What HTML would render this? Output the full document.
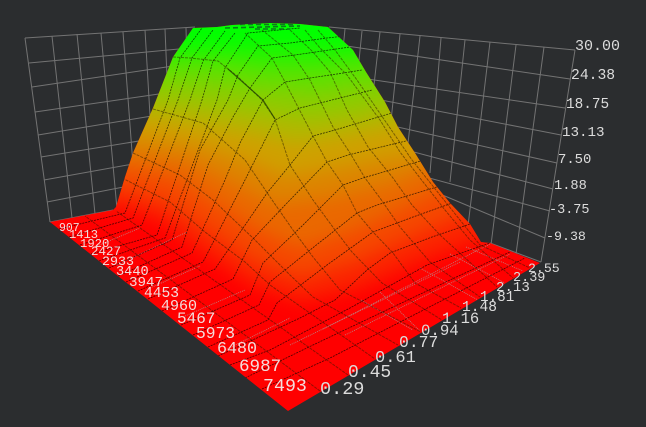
<!DOCTYPE html>
<html>
<head>
<meta charset="utf-8">
<style>
html,body{margin:0;padding:0;background:#2b2d2f;width:646px;height:427px;overflow:hidden}
svg{display:block}
text{font-family:"Liberation Mono","DejaVu Sans Mono",monospace;fill:#dcdcdc}
.w{fill:none;stroke:#737373;stroke-width:1}
.r{fill:none;stroke:#000;stroke-width:.8;stroke-opacity:.7;stroke-dasharray:2 1}
.c{fill:none;stroke:#2a1a00;stroke-width:1;stroke-opacity:.5;stroke-dasharray:3 1}
.g{fill:none;stroke:#a8a8a8;stroke-width:.8;stroke-dasharray:1 1;stroke-opacity:.8}
.t{fill:none;stroke:#0b7d1c;stroke-width:1.6;stroke-dasharray:5 3}
</style>
</head>
<body>
<svg width="646" height="427" viewBox="0 0 646 427" xmlns="http://www.w3.org/2000/svg">
<defs>
<clipPath id="s"><polygon points="50,222 113,210 116,207 125,177 133,153 153,108 173,57 193,28 217,27 232,25 270,23 300,24 328,27 353,50 366,72 385,102 398,127 415,153 433,182 450,203 470,224 481,242 490,243 540,263 288,411"/></clipPath>
<filter id="b" filterUnits="userSpaceOnUse" x="-100" y="-100" width="850" height="650" color-interpolation-filters="sRGB"><feGaussianBlur stdDeviation="9"/></filter>
</defs>
<rect width="646" height="427" fill="#2b2d2f"/>

<!-- left wall -->
<g class="w">
<path d="M25,38L195,27M29,63L200,47M32,87L200,62M35,112L200,88M38,135L200,108M41,157L200,131M44,180L200,152M47,202L200,172M50,222L113,210"/>
<path d="M25,38L50,222M52,36L72,218M77,34L95,214M101,33L117,209M123,32L136,205M145,30L155,201M165,29L172,198M186,28L190,195"/>
</g>
<!-- right wall -->
<g class="w">
<path d="M329,27L575,50M340,45L570,79M340,75L565,108M340,92L561,135M340,114L557,163M380,143L553,189M400,170L550,211M440,194L545,238M490,243L541,262"/>
<path d="M575,50L541,262M544,47L516,254M516,45L491,245M490,42L468,226M465,40L450,182M441,38L430,173M420,36L405,170M400,34L388,150M380,32L370,120M362,31L355,100M345,29L340,80"/>
</g>

<g clip-path="url(#s)">
<rect x="0" y="0" width="646" height="427" fill="#ff0000"/>
<g filter="url(#b)">
<polygon fill="#fb2400" points="-60,202 116,206 160,220 200,250 250,284 300,302 360,288 420,262 480,240 720,200 720,-60 -60,-60"/>
<polygon fill="#f54800" points="-60,184 122,190 165,202 208,230 255,262 300,278 355,262 410,238 460,216 720,180 720,-60 -60,-60"/>
<polygon fill="#ea6800" points="-60,166 128,170 175,178 220,206 262,232 300,248 350,232 400,210 445,188 720,165 720,-60 -60,-60"/>
<polygon fill="#dd8400" points="-60,150 133,154 185,160 235,184 275,204 330,198 390,184 430,168 720,145 720,-60 -60,-60"/>
<polygon fill="#cfa000" points="-60,134 140,136 195,144 245,160 285,176 335,168 395,157 720,125 720,-60 -60,-60"/>
<polygon fill="#b0b800" points="-60,116 148,116 200,124 250,132 295,142 345,135 400,125 720,105 720,-60 -60,-60"/>
<polygon fill="#8ccc00" points="-60,98 155,98 210,105 265,112 310,118 360,112 385,105 720,90 720,-60 -60,-60"/>
<polygon fill="#60e000" points="-60,80 163,78 215,82 270,88 315,92 365,85 720,75 720,-60 -60,-60"/>
<polygon fill="#28f200" points="-60,62 175,60 220,60 270,66 320,66 352,62 720,55 720,-60 -60,-60"/>
<polygon fill="#00ff00" points="-60,46 720,46 720,-60 -60,-60"/>
</g>

<!-- floor grid showing through -->
<g class="g">
<path d="M323,329L490,244M290,345L460,262M345,335L510,254M380,292L420,331M466,247L523,271M361,300L413,330M450,254L505,283M420,268L478,300M97,246L140,228M117,265L187,232M150,288L200,266M185,316L245,290M225,350L290,318"/>
</g>

<!-- rows -->
<g class="r">
<path d="M59,229L125,213L168,100L180,58L202,28"/>
<path d="M69,237L133,218L178,100L192,58L213,30"/>
<path d="M80,245L142,225L190,100L203,61L225,31"/>
<path d="M91,254L157,235L202,100L213,61L235,33"/>
<path d="M99,261L165,238L217,100L225,68L248,33L300,28"/>
<path d="M109,268L172,240L200,150L228,100L238,75L258,46L290,43L327,38L345,36"/>
<path d="M118,276L182,247L208,165L233,117L250,88L272,58L295,55L350,47L358,45"/>
<path d="M126,282L192,253L225,180L240,143L263,100L285,82L310,78L337,74L362,70"/>
<path d="M138,291L203,262L245,180L275,120L300,108L320,103L372,90"/>
<path d="M148,299L215,269L267,193L290,165L313,136L335,130L392,113"/>
<path d="M162,311L233,279L252,240L287,203L327,162L348,155L410,140"/>
<path d="M181,325L250,295L263,263L303,225L343,185L363,178L424,160"/>
<path d="M193,335L259,305L270,282L310,250L357,213L377,205L440,186"/>
<path d="M208,347L268,320L277,303L327,265L373,232L413,217L455,202"/>
<path d="M218,356L300,318L335,300L367,270L390,253L432,237L470,224"/>
<path d="M230,365L270,350L350,308L427,265L490,243"/>
<path d="M245,378L313,345L450,280L510,252"/>
<path d="M262,389L330,358L443,300L525,258"/>
</g>
<!-- columns -->
<g class="c">
<path d="M320,391L85,216M348,375L116,211"/>
<path d="M122,178L170,202L205,232L245,262L270,285L375,359"/>
<path d="M133,153L180,175L213,200L255,240L290,275L313,297L398,345"/>
<path d="M153,109L203,123L245,160L270,197L293,230L313,257L340,290L421,332"/>
<path d="M173,57L190,58L218,61L237,76L262,100L275,119L290,165L313,200L335,230L352,252L382,283L442,320"/>
<path d="M245,33L272,58L285,82L313,136L327,162L343,185L357,213L373,232L393,253L415,283L461,308"/>
<path d="M262,30L293,55L310,80L333,127L350,153L365,178L380,198L400,227L430,262L480,297"/>
<path d="M290,30L313,52L330,72L347,110L368,147L393,178L412,205L440,235L497,287"/>
<path d="M305,30L320,48L347,75L380,120L400,152L420,178L445,210L470,240L513,278"/>
<path d="M318,30L335,50L357,80L390,128L412,160L432,185L452,210L480,245L530,268"/>
</g>
<path fill="none" stroke="#1a3a00" stroke-width="1.2" stroke-opacity=".7" d="M228,69L263,100L275,119"/>
<!-- crown -->
<path class="t" d="M225,28L300,26M240,24.5L295,24.5M255,29L290,29"/>
</g>

<!-- z labels -->
<text x="575" y="50" font-size="15">30.00</text>
<text x="571" y="79" font-size="14.7">24.38</text>
<text x="566" y="108" font-size="14.4">18.75</text>
<text x="562" y="136" font-size="14.2">13.13</text>
<text x="558" y="163" font-size="13.9">7.50</text>
<text x="554" y="189" font-size="13.7">1.88</text>
<text x="549" y="213" font-size="13.5">-3.75</text>
<text x="546" y="240" font-size="13.3">-9.38</text>

<!-- rpm labels -->
<g>
<text x="59" y="231" font-size="11.5" style="fill:#f4dcdc">907</text>
<text x="69" y="238" font-size="12.1" style="fill:#f4dcdc">1413</text>
<text x="80" y="247" font-size="12.2" style="fill:#f4dcdc">1920</text>
<text x="91" y="255" font-size="12.5" style="fill:#f4dcdc">2427</text>
<text x="102" y="265" font-size="13.3" style="fill:#f4dcdc">2933</text>
<text x="116" y="275" font-size="13.6" style="fill:#f4dcdc">3440</text>
<text x="129" y="286" font-size="14.2" style="fill:#f4dcdc">3947</text>
<text x="144" y="297" font-size="14.6" style="fill:#f4dcdc">4453</text>
<text x="161" y="310" font-size="15" style="fill:#f4dcdc">4960</text>
<text x="177" y="323" font-size="16" style="fill:#f4dcdc">5467</text>
<text x="196" y="338" font-size="16.3" style="fill:#f4dcdc">5973</text>
<text x="217" y="353" font-size="16.7" style="fill:#f4dcdc">6480</text>
<text x="239" y="371" font-size="17.6" style="fill:#f4dcdc">6987</text>
<text x="263" y="391" font-size="18.3" style="fill:#f4dcdc">7493</text>
</g>

<!-- load labels -->
<text x="320" y="394" font-size="18.5">0.29</text>
<text x="348" y="377" font-size="18">0.45</text>
<text x="375" y="362" font-size="17">0.61</text>
<text x="399" y="347" font-size="16.4">0.77</text>
<text x="421" y="335" font-size="15.7">0.94</text>
<text x="442" y="323" font-size="15.5">1.16</text>
<text x="462" y="311" font-size="14.6">1.48</text>
<text x="480" y="301" font-size="14.3">1.81</text>
<text x="496" y="291" font-size="14.1">2.13</text>
<text x="513" y="281" font-size="13.5">2.39</text>
<text x="528" y="272" font-size="13.2">2.55</text>
</svg>
</body>
</html>
